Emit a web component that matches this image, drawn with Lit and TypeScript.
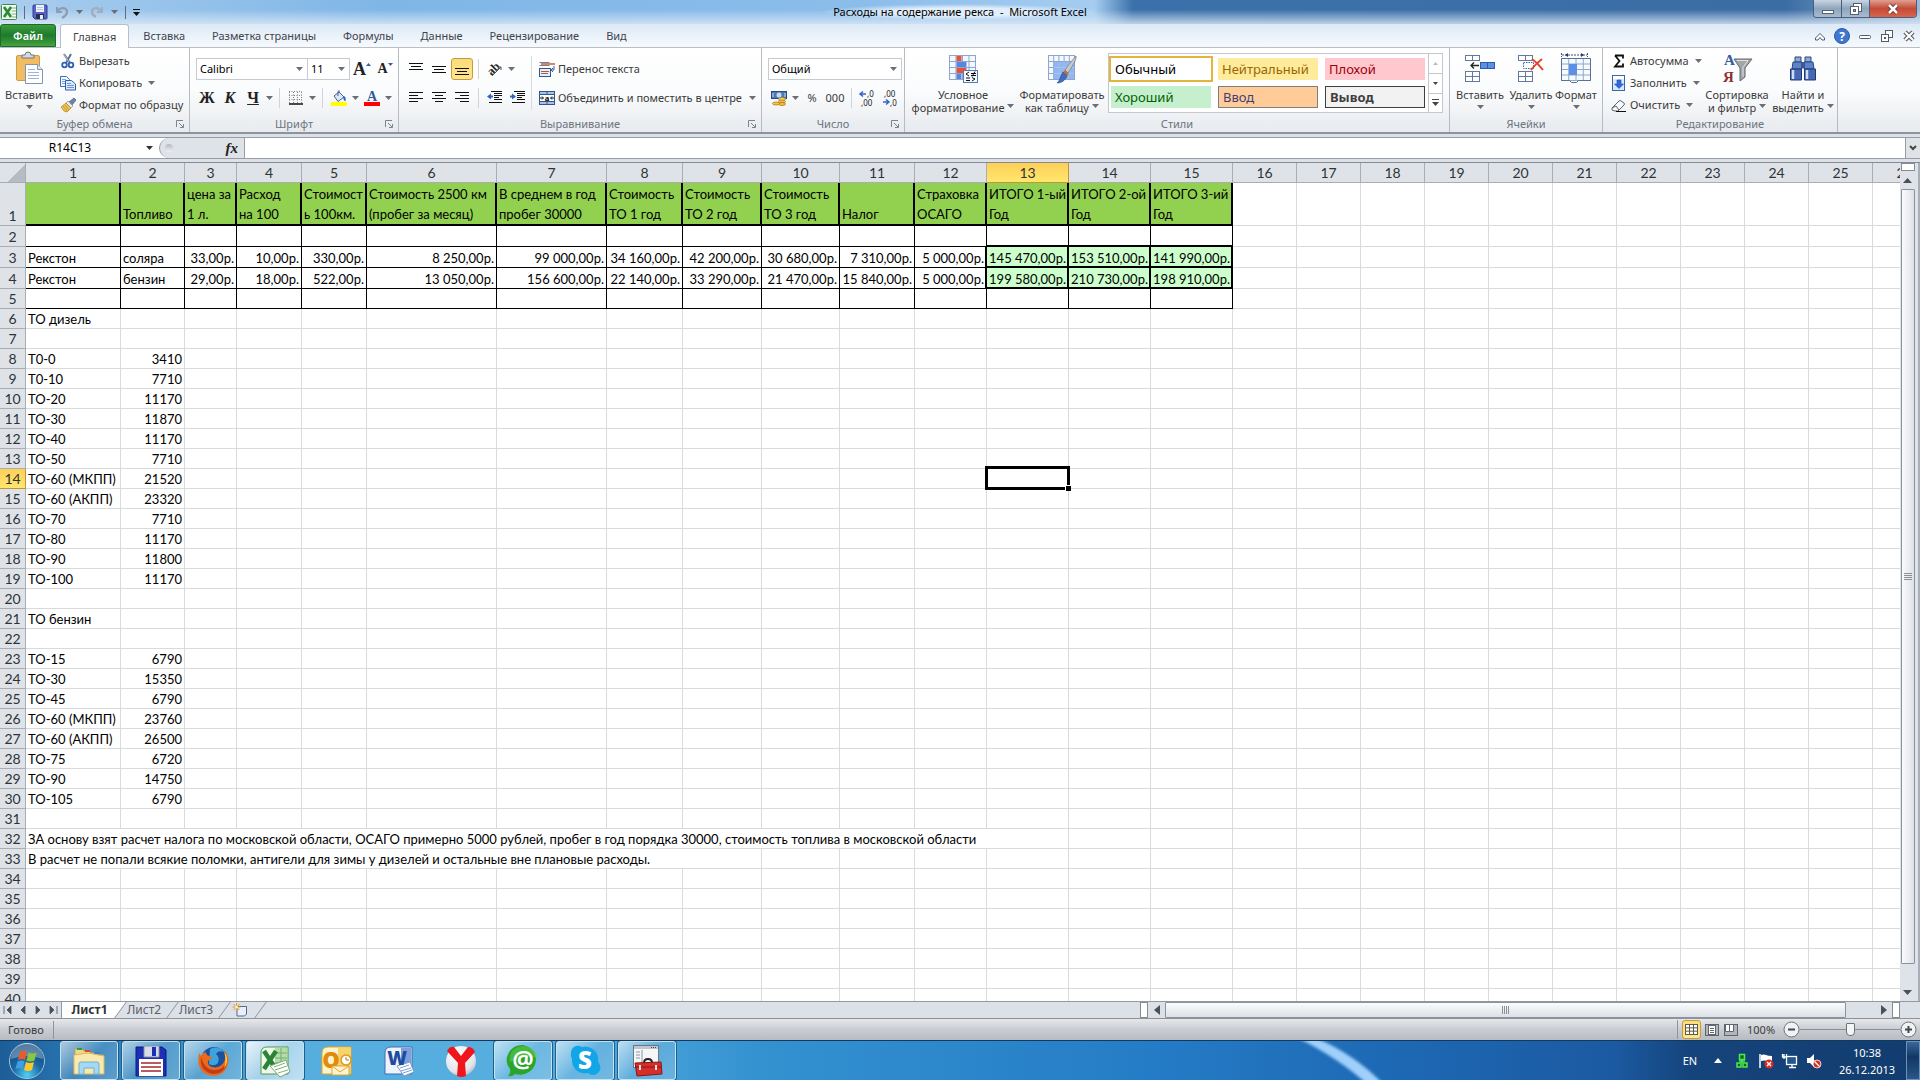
import { LitElement, html, svg, css, nothing } from "lit";
import { customElement } from "lit/decorators.js";
import { classMap } from "lit/directives/class-map.js";

const icon = (w: number, h: number, body: unknown) =>
  html`<svg width=${w} height=${h} viewBox="0 0 ${w} ${h}" aria-hidden="true">${body}</svg>`;

const arrow = html`<svg class="arrow" width="7" height="4" viewBox="0 0 7 4" aria-hidden="true"><path d="M0 0h7L3.500 4z" fill="#6a6f76" /></svg>`;

const lines = (rows: number[][], color = "#111") =>
  svg`${rows.map((r) => svg`<path d="M${r[0]} ${r[1]}.5h${r[2]}" stroke=${color} />`)}`;

const grid = (x: number, y: number, w: number, h: number, nx: number, ny: number, stroke: string, fill: string) => svg`
  <rect x=${x} y=${y} width=${w} height=${h} fill=${fill} stroke=${stroke} />
  ${Array.from({ length: nx - 1 }, (_, i) => svg`<path d="M${x + ((i + 1) * w) / nx} ${y}v${h}" stroke=${stroke} />`)}
  ${Array.from({ length: ny - 1 }, (_, i) => svg`<path d="M${x} ${y + ((i + 1) * h) / ny}h${w}" stroke=${stroke} />`)}`;

const I = {
  excel: icon(16, 16, svg`
    <rect x=".5" y=".5" width="15" height="15" rx="1" fill="#fff" stroke="#3c8a45"/>
    <path d="M2 2h9v12H2z" fill="#e3f2df"/><path d="M11 4h4M11 7h4M11 10h4M11 13h4" stroke="#6fb06f"/>
    <path d="M3 3l7 10M10 3L3 13" stroke="#2a8a37" stroke-width="2.600"/>`),
  save: icon(16, 16, svg`
    <path d="M1 2q0-1 1-1h12q1 0 1 1v12q0 1-1 1H3l-2-2z" fill="#5a63c4" stroke="#2f3a92"/>
    <rect x="4" y="1" width="8" height="7" fill="#eef2fb"/><path d="M5 3.500h6M5 5.500h6" stroke="#b8c3dd"/>
    <rect x="4" y="10" width="8" height="5" fill="#2b2f55"/><rect x="8" y="11" width="3" height="4" fill="#e8ecf8"/>`),
  undo: icon(14, 14, svg`<path d="M2 2v5h5" fill="none" stroke="#8f9db0" stroke-width="2"/><path d="M3 6c2-4 9-4 9 1 0 3-2 4-5 6" fill="none" stroke="#8f9db0" stroke-width="2.400"/>`),
  redo: icon(14, 14, svg`<path d="M12 2v5H7" fill="none" stroke="#a0aebf" stroke-width="2"/><path d="M11 6C9 2 2 2 2 7c0 3 2 4 4 5" fill="none" stroke="#a0aebf" stroke-width="2.400"/>`),
  paste: icon(32, 32, svg`
    <rect x="3.500" y="3.500" width="23" height="25" rx="1.500" fill="#f0bd63" stroke="#cf9a45"/>
    <path d="M9 6V3h3q0-3 3-3t3 3h3v3z" fill="#d5d9de" stroke="#6e7680"/>
    <path d="M12.500 12.500h12l5 5v14h-17z" fill="#fff" stroke="#7f95b8"/><path d="M24.500 12.500v5h5" fill="#dfe8f5" stroke="#7f95b8"/>
    <path d="M15 17.500h7M15 20.500h11M15 23.500h11M15 26.500h11" stroke="#9fb4d6"/>`),
  cut: icon(16, 16, svg`
    <path d="M4 1l6 9M11 1L6 10" stroke="#5f7187" stroke-width="2"/><path d="M4 1l5 8" stroke="#a9b7c9"/>
    <circle cx="4.500" cy="12" r="2.300" fill="none" stroke="#2c5fb5" stroke-width="1.800"/><circle cx="11" cy="12" r="2.300" fill="none" stroke="#2c5fb5" stroke-width="1.800"/>`),
  copy: icon(16, 16, svg`
    <path d="M.5 1.500h6l3 3v7h-9z" fill="#f2f7ff" stroke="#3f6fb8"/><path d="M2 4.500h4M2 6.500h5M2 8.500h5" stroke="#7fa3da"/>
    <path d="M5.500 5.500h6l4 3.500v6h-10z" fill="#dce9fb" stroke="#2f5fae"/><path d="M7 8.500h4M7 10.500h7M7 12.500h7" stroke="#6f97d3"/>`),
  brush: icon(16, 16, svg`
    <path d="M9 5l5-4 2 2-4 5z" fill="#6f83a8" stroke="#45587f" stroke-width=".7"/>
    <path d="M8 4l5 5-2 2-5-5z" fill="#e9ebef" stroke="#868d98" stroke-width=".7"/>
    <path d="M6 6l5 5-4 4-3-1-3-4z" fill="#eec554" stroke="#b98b25" stroke-width=".8"/><path d="M3 9l4 5M5 8l4 5" stroke="#c99a30"/>`),
  borders: icon(16, 16, svg`
    <path d="M1.500 2v12M5.500 2v12M9.500 2v12M13.500 2v12" stroke="#7b828b" stroke-dasharray="1 1.500"/>
    <path d="M1 1.500h13M1 5.500h13M1 9.500h13" stroke="#7b828b" stroke-dasharray="1 1.500"/><path d="M1 14h14" stroke="#111" stroke-width="1.500"/>`),
  fill: icon(16, 16, svg`
    <path d="M3 6l5-4 5 5-6 4.500z" fill="#dfe8f6" stroke="#46608c"/><path d="M7 6V1.500q1-1.500 2 0" fill="none" stroke="#46608c"/>
    <path d="M12 6c3 0 3 3 2.500 5-2 0-2-2-2.500-5z" fill="#2f66c4"/><rect y="12" width="16" height="4" fill="#ffff00"/>`),
  fontColor: icon(16, 16, svg`<text x="8" y="11" text-anchor="middle" font-family="Liberation Serif, serif" font-weight="700" font-size="14" fill="#34599c">A</text><rect y="12" width="16" height="4" fill="#f00"/>`),
  alignTop: icon(16, 16, lines([[1, 2, 14], [3, 5, 10], [1, 8, 14]])),
  alignMid: icon(16, 16, lines([[1, 5, 14], [3, 8, 10], [1, 11, 14]])),
  alignBot: icon(16, 16, lines([[1, 7, 14], [3, 10, 10], [1, 13, 14]])),
  alignL: icon(16, 16, lines([[1, 2, 14], [1, 5, 9], [1, 8, 14], [1, 11, 9]])),
  alignC: icon(16, 16, lines([[1, 2, 14], [4, 5, 8], [1, 8, 14], [4, 11, 8]])),
  alignR: icon(16, 16, lines([[1, 2, 14], [6, 5, 9], [1, 8, 14], [6, 11, 9]])),
  rotate: icon(16, 16, svg`<text x="0" y="12" transform="rotate(-45 6 8)" font-family="Liberation Serif, serif" font-weight="700" font-size="12" fill="#222">ab</text><path d="M5 15l9-9M14 9V6h-3" fill="none" stroke="#555"/>`),
  outdent: icon(16, 16, svg`${lines([[4, 1, 11], [7, 3, 8], [7, 5, 8], [7, 7, 5], [7, 9, 8], [2, 12, 13]])}<path d="M0 6.500l4-3v2h2v2H4v2z" fill="#2f66c4"/>`),
  indent: icon(16, 16, svg`${lines([[4, 1, 11], [7, 3, 8], [7, 5, 8], [7, 7, 5], [7, 9, 8], [2, 12, 13]])}<path d="M6 6.500l-4-3v2H0v2h2v2z" fill="#2f66c4"/>`),
  wrap: icon(16, 16, svg`
    <path d="M.5 1.500h10M.5 4.500h10" stroke="#70809c"/><path d="M2 3h14" stroke="#c3622c" stroke-width="1.500"/>
    <rect x=".5" y="7.500" width="11" height="8" fill="#e6eefb" stroke="#35548c"/><path d="M2 10.500h8M2 12.500h7" stroke="#b3592c"/>
    <path d="M15 5v4h-2M14 7l-2 2 2 2" fill="none" stroke="#2f5fb0"/>`),
  merge: icon(16, 16, svg`
    <rect x=".5" y="1.500" width="15" height="13" fill="#fff" stroke="#34548c"/><path d="M1 4.500h14M1 11.500h14" stroke="#34548c"/>
    <path d="M1 2h14v2H1zM1 12h14v2H1z" fill="#a8c1ea"/><path d="M8 2v2M8 12v3" stroke="#34548c"/>
    <text x="8" y="10.500" text-anchor="middle" font-family="Liberation Serif, serif" font-weight="700" font-size="9">a</text>
    <path d="M1 8h3M12 8h3M3 6.500L4.500 8 3 9.500M13 6.500L11.500 8l1.500 1.500" fill="none" stroke="#111"/>`),
  money: icon(16, 16, svg`
    <rect x=".5" y="1.500" width="15" height="7" fill="#4b78bd" stroke="#2a4a82"/><circle cx="8" cy="5" r="2.500" fill="#c9dbf4"/>
    <path d="M2 3v4M14 3v4" stroke="#c9dbf4"/><ellipse cx="11" cy="9" rx="3.500" ry="1.500" fill="#ffdb6b" stroke="#a87415" stroke-width=".7"/>
    <ellipse cx="11" cy="11.500" rx="3.500" ry="1.500" fill="#f5c040" stroke="#a87415" stroke-width=".7"/><ellipse cx="11" cy="14" rx="3.500" ry="1.500" fill="#f5c040" stroke="#a87415" stroke-width=".7"/>
    <ellipse cx="5" cy="13.500" rx="3.500" ry="1.500" fill="#f5c040" stroke="#a87415" stroke-width=".7"/>`),
  decInc: icon(18, 16, svg`<path d="M1 4h6M4 1.500L1 4l3 2.500" fill="none" stroke="#2f66c4" stroke-width="1.500"/>
    <text x="8" y="7" class="dec">,0</text><text x="2" y="16" class="dec">,00</text>`),
  decDec: icon(18, 16, svg`<text x="2" y="7" class="dec">,00</text><path d="M1 12h6M4 9.500L7 12l-3 2.500" fill="none" stroke="#2f66c4" stroke-width="1.500"/>
    <text x="8" y="16" class="dec">,0</text>`),
  cond: icon(32, 32, svg`
    ${grid(2.5, 3.5, 26, 24, 4, 4, "#8fa6cc", "#f3f8ff")}
    <path d="M9.500 4h5v5h-5zM9.500 16h10v5h-10z" fill="#e8503a"/><path d="M9.500 10h10v5h-10zM9.500 22h5v5h-5z" fill="#5687e0"/>
    <rect x="16.500" y="18.500" width="14" height="12" fill="#f4f8fe" stroke="#5a7cb4"/>
    <path d="M22 20l-3 2 3 2M19 26h4M19 28.500h4M24 21.500h5M24 23.500h5M28 19.500l-3 5M25 25.500l3 1.500-3 2" fill="none" stroke="#111"/>`),
  table: icon(32, 32, svg`
    ${grid(2.5, 3.5, 26, 24, 5, 4, "#8fa6cc", "#f3f8ff")}
    <path d="M8 10h20v17H8z" fill="#79a5ec" opacity=".8"/><path d="M8 15.500h20M8 21.500h20M13 10v17M18 10v17M23 10v17" stroke="#a9c5f3"/>
    <path d="M30 4c1 3-4 11-8 17l-3-3C23 12 28 6 30 4z" fill="#c4c9d0" stroke="#747c88" stroke-width=".8"/>
    <path d="M19 18l4 4-2 2-4-4z" fill="#b9752e"/><path d="M17 20l4 4c-2 5-6 7-10 7 3-2 3-7 6-11z" fill="#3f6cc0" stroke="#284a8c" stroke-width=".6"/>`),
  insCells: icon(32, 32, svg`
    ${grid(1.5, 3.5, 14, 5, 2, 1, "#64799f", "#fff")}${grid(1.5, 19.5, 14, 10, 2, 2, "#64799f", "#fff")}
    <rect x="16.500" y="10.500" width="14" height="6" fill="#5c90e6" stroke="#2f5aa6"/><path d="M23.500 10.500v6" stroke="#2f5aa6"/>
    <path d="M7 13.500h8M10 10.500l-3 3 3 3" fill="none" stroke="#222" stroke-width="1.300"/>`),
  delCells: icon(32, 32, svg`
    ${grid(3.5, 3.5, 14, 5, 2, 1, "#64799f", "#fff")}${grid(3.5, 19.5, 14, 10, 2, 2, "#64799f", "#fff")}
    <rect x="8.500" y="10.500" width="10" height="6" fill="none" stroke="#3f68b4" stroke-dasharray="1.500 1"/>
    <path d="M17 7c3 2 8 7 11 11M27 7c-4 3-8 7-11 11" fill="none" stroke="#e2452b" stroke-width="2"/>`),
  fmtCells: icon(32, 32, svg`
    <path d="M1.500 1v4M27.500 1v4M2 3h25" stroke="#3d5378" stroke-dasharray="2 1"/><path d="M8 1L5 3l3 2zM21 1l3 2-3 2z" fill="#233a63"/>
    ${grid(1.5, 6.5, 29, 22, 4, 4, "#8fa6cc", "#f6faff")}<path d="M9 12h8v11H9z" fill="#5c90e6"/>
    <path d="M1.500 6.500h29v22h-12l-2 2h-5l-2-2h-8z" fill="none" stroke="#5a7099"/>`),
  fillDown: icon(16, 16, svg`<rect x="1.500" y=".5" width="12" height="15" fill="#dbe8fb" stroke="#3b64ab"/><path d="M2 1h11v3H2z" fill="#fff"/><path d="M6 5h4v4h2.500L8 13.500 3.500 9H6z" fill="#2f6be0" stroke="#1d49a5" stroke-width=".6"/>`),
  eraser: icon(16, 16, svg`<path d="M1 11l7-7q1-1 2 0l3 2q1 1 0 2l-6 6H4l-3-1z" fill="#f6f8fb" stroke="#5c6675"/><path d="M1 11l4-2 3 4" fill="none" stroke="#5c6675"/><path d="M5 14.500h10" stroke="#111"/>`),
  sort: icon(32, 32, svg`
    <text x="3" y="13" font-family="Liberation Serif, serif" font-weight="700" font-size="15" fill="#34599c">А</text>
    <text x="2" y="30" font-family="Liberation Serif, serif" font-weight="700" font-size="15" fill="#8f2f2f">Я</text>
    <path d="M13 7h18l-7 9v9l-5 4V16z" fill="#a2a6ab" stroke="#65696e"/><path d="M16 8.500h11l-5 7v9" fill="none" stroke="#dfe1e4"/>`),
  find: icon(32, 32, svg`
    <path d="M8 5h6v5H8zM18 5h6v5h-6z" fill="#8ea8da" stroke="#2c4680"/><path d="M6 10h9v7H5zM17 10h9l1 7H17z" fill="#5f83c9" stroke="#2c4680"/>
    <rect x="14" y="10" width="4" height="6" fill="#3a5796"/>
    <path d="M3.500 17h11v11h-11zM17.500 17h11v11h-11z" fill="#4469b5" stroke="#223a72"/><path d="M6 18v9M20 18v9" stroke="#cfdcf4" stroke-width="2.500"/>`),
  newSheet: icon(16, 14, svg`<path d="M5 3.500h9.500V11l-2 2H5z" fill="#e9effa" stroke="#51688f"/><path d="M4.500 0v8M.5 4h8M1.500 1l6 6M7.500 1l-6 6" stroke="#e09a2b"/><circle cx="4.500" cy="4" r="1.500" fill="#fff2b0"/>`),
};

const T = {
  orb: icon(38, 38, svg`
    <defs><radialGradient id="ob" cx=".5" cy=".9" r=".9"><stop offset="0" stop-color="#4fd0f4"/><stop offset=".45" stop-color="#1c6aa5"/><stop offset="1" stop-color="#123f70"/></radialGradient></defs>
    <circle cx="19" cy="19" r="17.500" fill="url(#ob)" stroke="#9cc6de"/><path d="M3 17a16 16 0 0 1 32 0q-16-6-32 0z" fill="#fff" opacity=".3"/>
    <path d="M12 10q3-2 7 0l-2 8q-3-2-7 0z" fill="#ee5a27"/><path d="M20.500 10.500q4 2 8 0l-2 8q-4 2-8 0z" fill="#8cc63e"/>
    <path d="M9.500 19.500q4-2 7 0l-2 7.500q-3-2-7 0z" fill="#3f9fe4"/><path d="M18 20q4 2 8 0l-2 8q-4 2-8 0z" fill="#fcc727"/>`),
  folder: icon(34, 32, svg`
    <path d="M3 4h7l2 2h5l2 2h5l2 2h5v17H3z" fill="#f2d684" stroke="#c9a24b"/><path d="M5 3h5v2H5z" fill="#25a344"/><path d="M13 5h5v2h-5z" fill="#d94a2a"/><path d="M22 7h6v2h-6z" fill="#3f7fd0"/>
    <path d="M2 10l14-2 16 3v18H2z" fill="#f9e9ac" stroke="#d9b964"/><path d="M7 29V19q0-2 2-2h16q2 0 2 2v10h-5v-6H12v6z" fill="#a5d8f2" stroke="#6ab1da"/>`),
  floppy: icon(34, 32, svg`
    <path d="M2 2h26l4 3v26H2z" fill="#1d2fb4" stroke="#0d1a7c"/><path d="M10 1h15v11H10z" fill="#d8dce6" stroke="#8a90a5"/><rect x="18" y="2" width="4" height="9" fill="#1d2fb4"/>
    <rect x="5" y="14" width="24" height="17" fill="#fff"/><path d="M7 18h20M7 22h20M7 26h20" stroke="#a3262c" stroke-width="1.500"/>`),
  firefox: icon(34, 34, svg`
    <circle cx="18" cy="16" r="13" fill="#1c4f9c"/><path d="M14 5q8-4 14 3-6-2-8 2 4 3 2 9-4 4-9 1" fill="#3ea3dc"/>
    <path d="M3 9l2 3q1-3 5-4 0 3 3 4 3 0 3 2l-4 3q-1 4 4 6 8 2 12-5 3-6 0-12 6 6 4 14-3 11-14 12Q5 31 2.500 20 2 14 3 9z" fill="#ea6a1c"/>
    <path d="M5 13q-2 13 11 17Q30 30 31 17q-4 10-14 9-9-1-12-13z" fill="#c63b17"/><path d="M28 8q5 6 2 13l-2 3q3-8 0-16z" fill="#fcd548"/>`),
  xl: icon(34, 32, svg`
    <path d="M3 8q0-6 6-6h21v27H3z" fill="#eef7ea" stroke="#4f9a4f"/><path d="M17 3h12v25H17z" fill="#b6dbab"/><path d="M17 8h12M17 13h12M17 18h12M23 3v25" stroke="#6fb16a"/>
    <path d="M6 6l12 18M18 6L6 24" stroke="#2a8436" stroke-width="4.500"/><path d="M12 21l16-6 4 12-10 5z" fill="#fff" stroke="#79a874"/><path d="M16 22l11-4M17 25l12-4M20 28l10-3" stroke="#7ab573"/>`),
  outlook: icon(34, 32, svg`
    <path d="M2 8q0-6 6-6h23v27H2z" fill="#fff3cd" stroke="#e1a51f"/><path d="M18 3h12v25H18z" fill="#f8d36b"/>
    <text x="11" y="23" text-anchor="middle" font-family="Open Sans, sans-serif" font-weight="800" font-size="22" fill="#e28a0b">O</text>
    <circle cx="26" cy="15" r="5" fill="#fff" stroke="#d99a1e" stroke-width="1.500"/><path d="M26 12v3h3" fill="none" stroke="#b77a10"/>
    <path d="M12 21h17v9H12z" fill="#fff6da" stroke="#e1a51f"/><path d="M12 21l8 6 9-6" fill="none" stroke="#e1a51f"/>`),
  word: icon(34, 32, svg`
    <path d="M3 8q0-6 6-6h21v27H3z" fill="#eef4fd" stroke="#3f6db8"/><path d="M19 3h10v25H19z" fill="#7f9fdc"/>
    <path d="M15 21l13-4 4 10-10 4z" fill="#fff" stroke="#7f9bcb"/><path d="M18 23l9-3M19 26l10-3M21 28l9-3" stroke="#7f9fd6"/>
    <text x="15" y="20" text-anchor="middle" font-family="Open Sans, sans-serif" font-weight="800" font-size="19" fill="#1f4c9e">W</text>`),
  yandex: icon(34, 34, svg`
    <defs><radialGradient id="yb" cx=".4" cy=".3" r=".8"><stop offset="0" stop-color="#fff"/><stop offset=".7" stop-color="#e3e5ea"/><stop offset="1" stop-color="#a8adb8"/></radialGradient></defs>
    <circle cx="17" cy="17" r="15" fill="url(#yb)"/><path d="M3 7q3-5 7-4l7 9 7-9q5 0 7 5l-10 11 1 13q-5 2-9 0l1-13z" fill="#f0141c"/>`),
  agent: icon(34, 34, svg`
    <path d="M17 1a16 15 0 1 1-8 29q-3 3-7 2 3-3 2-7A16 15 0 0 1 17 1z" fill="#2aa52c"/>
    <path d="M17 2a14 12 0 0 1 14 12Q18 10 4 18 2 4 17 2z" fill="#5cc94c" opacity=".6"/>
    <text x="17" y="24" text-anchor="middle" font-family="Open Sans, sans-serif" font-weight="700" font-size="24" fill="#fff">@</text>`),
  skype: icon(34, 34, svg`
    <path d="M3 9a7 7 0 0 1 11-6 13 13 0 0 1 16 15 7 7 0 0 1-10 11A13 13 0 0 1 4 15 8 8 0 0 1 3 9z" fill="#12a5e8"/>
    <text x="17" y="25" text-anchor="middle" font-family="Open Sans, sans-serif" font-weight="800" font-size="24" fill="#fff">S</text>`),
  toolbox: icon(34, 34, svg`
    <rect x="3.500" y="1.500" width="25" height="22" fill="#f5f6f8" stroke="#6e7680"/><path d="M4 2h24v3H4z" fill="#bfc6d0"/><path d="M21 3.500h6" stroke="#444" stroke-dasharray="1 1"/><path d="M6 8h4M6 11h4M6 14h4M12 6v16" stroke="#8c939e"/>
    <path d="M14 19q0-4 4-4t4 4" fill="none" stroke="#222" stroke-width="2"/><path d="M5 19l26-1 1 12-25 2z" fill="#d42f2b" stroke="#8d1512"/><path d="M5 23h27" stroke="#8d1512"/><path d="M10 21v5M26 21v5" stroke="#f3dede" stroke-width="2"/>`),
};

const COLS = [95, 64, 52, 65, 65, 130, 110, 76, 79, 78, 75, 72, 82, 82, 82, 64, 64, 64, 64, 64, 64, 64, 64, 64, 64, 64];
const HEAD = ["", "Топливо", "цена за\n1 л.", "Расход\nна 100", "Стоимост\nь 100км.", "Стоимость 2500 км\n(пробег за месяц)", "В среднем в год\nпробег 30000", "Стоимость\nТО 1 год", "Стоимость\nТО 2 год", "Стоимость\nТО 3 год", "Налог", "Страховка\nОСАГО", "ИТОГО 1-ый\nГод", "ИТОГО 2-ой\nГод", "ИТОГО 3-ий\nГод"];
const DATA: Record<number, string[]> = {
  1: HEAD,
  3: ["Рекстон", "соляра", "33,00р.", "10,00р.", "330,00р.", "8 250,00р.", "99 000,00р.", "34 160,00р.", "42 200,00р.", "30 680,00р.", "7 310,00р.", "5 000,00р.", "145 470,00р.", "153 510,00р.", "141 990,00р."],
  4: ["Рекстон", "бензин", "29,00р.", "18,00р.", "522,00р.", "13 050,00р.", "156 600,00р.", "22 140,00р.", "33 290,00р.", "21 470,00р.", "15 840,00р.", "5 000,00р.", "199 580,00р.", "210 730,00р.", "198 910,00р."],
  6: ["ТО дизель"],
  8: ["Т0-0", "3410"],
  9: ["Т0-10", "7710"],
  10: ["ТО-20", "11170"],
  11: ["ТО-30", "11870"],
  12: ["ТО-40", "11170"],
  13: ["ТО-50", "7710"],
  14: ["ТО-60 (МКПП)", "21520"],
  15: ["ТО-60 (АКПП)", "23320"],
  16: ["ТО-70", "7710"],
  17: ["ТО-80", "11170"],
  18: ["ТО-90", "11800"],
  19: ["ТО-100", "11170"],
  21: ["ТО бензин"],
  23: ["ТО-15", "6790"],
  24: ["ТО-30", "15350"],
  25: ["ТО-45", "6790"],
  26: ["ТО-60 (МКПП)", "23760"],
  27: ["ТО-60 (АКПП)", "26500"],
  28: ["ТО-75", "6720"],
  29: ["ТО-90", "14750"],
  30: ["ТО-105", "6790"],
  32: ["ЗА основу взят расчет налога по московской области, ОСАГО примерно 5000 рублей, пробег в год порядка 30000, стоимость топлива в московской области"],
  33: ["В расчет не попали всякие поломки, антигели для зимы у дизелей и остальные вне плановые расходы."],
};
const SPANS: Record<number, number> = { 32: 13, 33: 9 };

const reset = css`
  * { box-sizing: border-box; }
  button, select, input { font: inherit; color: inherit; margin: 0; padding: 0; border: 0; background: none; border-radius: 0; }
  svg { display: block; flex: none; overflow: visible; }
`;

@customElement("sheet-grid")
export class SheetGrid extends LitElement {
  static styles = [reset, css`
    :host { display: block; overflow: hidden; background: #fff; }
    table { table-layout: fixed; width: 0; border-collapse: separate; border-spacing: 0; font: 13px/20px Lato, "Open Sans", sans-serif; color: #000; }
    .rowhead-col { width: 26px; }
    th { height: 20px; padding: 0; font-weight: 400; font-size: 14px; color: #2e3338; background: #dfe3e8; border: solid #a8aeb6; border-width: 0 1px 1px 0; text-align: center; vertical-align: bottom; line-height: 19px; }
    .picked { background: linear-gradient(#ffcf57, #ffe76e); border-color: #c2933a; }
    .corner { background: linear-gradient(135deg, #dfe3e8 60%, #b6bcc4 60%); }
    td { height: 20px; padding: 0 1px 0 2px; border: solid #d8dadc; border-width: 0 1px 1px 0; white-space: nowrap; vertical-align: bottom; line-height: 17px; }
    .num { text-align: right; padding-right: 2px; padding-left: 0; }
    .tall { height: 43px; }
    .mid { height: 21px; }
    .boxed { border-color: #000; }
    .head { background: #92d050; border: solid #000; border-width: 0 2px 2px 0; padding-right: 0; white-space: pre; line-height: 20px; }
    .total { background: #ccffcc; border: solid #000; border-width: 0 2px 2px 0; padding-right: 1px; line-height: 16px; }
    .thick-bottom { border-bottom-width: 2px; }
    .thick-right { border-right-width: 2px; padding-right: 1px; }
    .active { position: relative; }
    .active::before { content: ""; position: absolute; inset: -3px -2px -2px -2px; border: 3px solid #000; }
    .active::after { content: ""; position: absolute; right: -3px; bottom: -3px; width: 5px; height: 5px; background: #000; border: solid #fff; border-width: 1px 0 0 1px; }
  `];

  private cell(r: number, c: number) {
    const text = DATA[r]?.[c - 1] ?? "";
    const table = r <= 5 && c <= 15;
    const cls = {
      boxed: table,
      head: r === 1 && c <= 15,
      num: r > 1 && /^\d/.test(text),
      total: (r === 3 || r === 4) && c >= 13 && c <= 15,
      "thick-bottom": r === 2 && c >= 13 && c <= 15,
      "thick-right": (r === 3 || r === 4) && c === 12,
      active: r === 14 && c === 13,
    };
    const span = c === 1 ? SPANS[r] : undefined;
    return html`<td class=${classMap(cls)} colspan=${span ?? 1}>${text}</td>`;
  }

  private row(r: number) {
    const cells = COLS.map((_, i) => i + 1).filter((c) => c === 1 || c > (SPANS[r] ?? 1));
    const size = { tall: r === 1, mid: r > 1 && r < 5 };
    return html`<tr><th scope="row" class=${classMap({ ...size, picked: r === 14 })}>${r}</th>${cells.map((c) => this.cell(r, c))}</tr>`;
  }

  render() {
    return html`<table>
      <colgroup><col class="rowhead-col" />${COLS.map((w) => html`<col style="width:${w}px" />`)}</colgroup>
      <thead><tr><th class="corner"></th>${COLS.map((_, i) => html`<th scope="col" class=${i === 12 ? "picked" : nothing}>${i + 1}</th>`)}</tr></thead>
      <tbody>${Array.from({ length: 40 }, (_, i) => this.row(i + 1))}</tbody>
    </table>`;
  }
}

@customElement("app-root")
export class AppRoot extends LitElement {
  static styles = [reset, css`
    :host { display: flex; flex-direction: column; height: 100vh; min-height: 600px; overflow: hidden; font: 11px/14px "Noto Sans", "Open Sans", sans-serif; color: #3b3b3b; background: #dce1e8; }
    button { display: inline-flex; align-items: center; justify-content: center; white-space: nowrap; }
    .arrow { flex: none; }

    .title { display: grid; grid-template-columns: 1fr auto 1fr; height: 24px; background: linear-gradient(transparent 40%, #dce9f6cc 100%), linear-gradient(90deg, #a9cdee, #7fb6e6 20%, #8bbdea 45%, #a6cdf0 57%, #3b71aa 59%, #3b6da4 93%, #9db9d6); }
    .qat { display: flex; align-items: center; gap: 7px; padding-left: 1px; }
    .qat .bar { width: 1px; height: 13px; background: #5c6d80; }
    .title h1 { margin: 0; align-self: center; font-size: 11px; font-weight: 400; line-height: 16px; color: #000; white-space: pre; padding: 0 12px; background: radial-gradient(closest-side, #e2effb 50%, transparent); }
    .wins { display: flex; justify-self: end; align-self: start; margin-right: 3px; border: 1px solid #48607c; border-top: 0; border-radius: 0 0 4px 4px; overflow: hidden; }
    .wins button { height: 17px; width: 28px; border-right: 1px solid #48607c; background: linear-gradient(#c9d5e2, #8ea5bd 50%, #a9bccf); }
    .wins .close { width: 46px; border-right: 0; background: linear-gradient(#e0a090, #c64a38 50%, #d8654c); }

    .tabs { display: flex; height: 24px; background: linear-gradient(#dce9f6, #f7fafd); border-bottom: 1px solid #b9bfc8; align-items: stretch; }
    .tabs .tab { padding: 0 13px 0 14px; color: #3f444b; height: 23px; }
    .tabs .file { width: 56px; padding: 0; color: #fff; font-weight: 600; border-radius: 3px 3px 0 0; background: linear-gradient(#3c9c3e, #1d7a2c 50%, #46a33d); border: 1px solid #1c6b28; margin-right: 4px; }
    .tabs .on { background: #fff; height: 24px; padding: 0 12px; border: 1px solid #b9bfc8; border-bottom: 0; border-radius: 3px 3px 0 0; }
    .tabs .tail { margin-left: auto; display: flex; align-items: center; gap: 8px; padding-right: 4px; }

    .ribbon { display: grid; grid-template-columns: 190px 209px 363px 143px 545px 153px 235px 1fr; height: 86px; background: linear-gradient(#fff, #fbfcfd 50%, #e7eaee); border-bottom: 2px solid #8d939c; }
    .group { display: flex; flex-direction: column; border-right: 1px solid #b7bcc4; min-width: 0; }
    .body { display: flex; flex: 1; min-height: 0; }
    .caption { display: grid; grid-template-columns: 14px 1fr 14px; align-items: center; height: 16px; color: #6d747e; text-align: center; padding: 0 2px; }
    .caption span { grid-column: 2; }
    .stack { display: flex; flex-direction: column; padding-top: 2px; align-items: flex-start; }
    .edit { width: 101px; padding-left: 6px; }
    .small { height: 22px; gap: 3px; padding: 0 2px; color: #3b3b3b; }
    .small .arrow { margin-left: 3px; }
    .big { flex: none; flex-direction: column; justify-content: flex-start; padding-top: 4px; line-height: 13px; height: 68px; }
    .big svg:first-child { margin-bottom: 4px; }
    .big .line { display: flex; align-items: center; gap: 3px; height: 13px; }
    .big > .arrow { margin-top: 4px; }
    .w42 { width: 42px; } .w48 { width: 48px; } .w58 { width: 58px; } .w60 { width: 60px; } .w66 { width: 66px; } .w82 { width: 82px; } .w116 { width: 116px; }
    .rows { display: flex; flex-direction: column; gap: 7px; padding: 10px 0 0 6px; }
    .row { display: flex; align-items: center; gap: 1px; height: 22px; }
    .tool { width: 22px; height: 22px; }
    .drop { width: 9px; height: 22px; }
    .sel { background: linear-gradient(#fbdc7c, #ffe58d); border: 1px solid #c79b3c; border-radius: 3px; }
    .sep { width: 1px; height: 20px; margin: 0 4px; background: #d0d4da; }
    .tallsep { width: 1px; height: 54px; margin: 8px 4px 0 2px; background: #d8dbe0; }
    .glyph { font: bold 16px/20px "Liberation Serif", serif; color: #222; }
    .italic { font-style: italic; } .under { text-decoration: underline; }
    .grow { font-size: 18px; } .shrink { font-size: 14px; }
    .dec { font: 8px "Noto Sans", sans-serif; fill: #222; }
    .combo { display: grid; align-items: center; height: 22px; border: 1px solid #c6cbd2; background: #fff; color: #000; }
    .combo select { grid-area: 1 / 1; appearance: none; height: 20px; padding-left: 3px; outline: 0; width: 100%; }
    .combo .arrow { grid-area: 1 / 1; justify-self: end; margin-right: 4px; pointer-events: none; }
    .c-font { width: 112px; } .c-size { width: 43px; } .c-num { width: 134px; }
    .join { margin-left: -2px; }
    .text { padding: 0 2px; gap: 3px; height: 22px; }
    .text .arrow { margin-left: 4px; }
    .inner { padding-left: 1px; }

    .gallery { display: grid; grid-template-columns: 1fr 14px; width: 335px; height: 60px; margin: 5px 0 0 5px; border: 1px solid #c3c8cf; background: #fff; }
    .chips { display: grid; grid-template-columns: repeat(3, 100px); grid-template-rows: 22px 22px; gap: 6px 7px; padding: 4px 0 0 2px; font-size: 13px; }
    .chip { justify-content: flex-start; padding-left: 4px; }
    .normal { color: #000; outline: 2px solid #e3b53d; outline-offset: 0; }
    .neutral { background: #ffeb9c; color: #9c6500; }
    .bad { background: #ffc7ce; color: #9c0006; }
    .good { background: #c6efce; color: #006100; }
    .entry { background: #ffcc99; color: #3f3f76; border: 1px solid #7f7f7f; }
    .output { background: #f2f2f2; color: #3f3f3f; border: 1px solid #3f3f3f; font-weight: 700; }
    .updown { display: grid; grid-template-rows: repeat(3, 1fr); border-left: 1px solid #c3c8cf; }
    .updown button + button { border-top: 1px solid #c3c8cf; }

    .formula { display: flex; height: 22px; margin: 3px 0; border: solid #979da6; border-width: 1px 0; background: #fff; }
    .name { display: flex; align-items: center; width: 159px; color: #000; }
    .name input { width: 140px; text-align: center; font-size: 12px; }
    .name button { width: 19px; }
    .fx { display: flex; align-items: center; width: 86px; background: #dfe3e8; border-right: 1px solid #979da6; border-radius: 10px 0 0 10px; border-left: 1px solid #979da6; padding: 0 6px 0 5px; justify-content: space-between; }
    .fx i { width: 8px; height: 8px; border-radius: 50%; background: linear-gradient(#b5bac0, #eef0f3); }
    .fx button { font: italic bold 15px/18px "Liberation Serif", serif; color: #222; }
    .formula .value { flex: 1; min-width: 0; padding: 0 4px; }
    .formula .expand { width: 15px; background: #dfe3e8; border-left: 1px solid #979da6; }

    .sheet { display: flex; flex: 1; min-height: 0; border-top: 1px solid #858b94; }
    sheet-grid { flex: 1; min-width: 0; }
    .vbar { display: flex; flex-direction: column; align-items: center; width: 20px; background: #dfe3e9; border-right: 2px solid #a9afb8; padding-right: 3px; }
    .vbar .split { width: 14px; height: 8px; border: 1px solid #858b94; background: #fff; }
    .vbar .end { height: 18px; width: 14px; }
    .vbar .thumb, .hbar .thumb { display: flex; align-items: center; justify-content: center; border: 1px solid #8b929c; border-radius: 1px; }
    .vbar .thumb { width: 14px; flex: 1; margin-bottom: 19px; background: linear-gradient(90deg, #fafbfc, #dde1e7); }

    .foot { display: flex; height: 17px; background: #dce0e7; border-top: 1px solid #9299a2; }
    .nav { display: flex; width: 62px; align-items: center; justify-content: space-around; border-right: 1px solid #9299a2; }
    .nav button { width: 14px; height: 14px; }
    .sheets { display: flex; flex: 1; font-size: 12px; }
    .sheets button { position: relative; width: 52px; height: 16px; color: #5a6068; }
    .sheets button::after { content: ""; position: absolute; right: -7px; top: 0; width: 1px; height: 16px; background: #8d949e; transform: skewX(-36deg); }
    .sheets .cur { color: #333; font-weight: 700; background: #fff; padding-right: 5px; }
    .sheets .cur::before { content: ""; position: absolute; right: -6px; top: 0; width: 12px; height: 16px; background: #fff; transform: skewX(-36deg); }
    .sheets .cur span { position: relative; }
    .sheets span { padding-left: 8px; }
    .sheets .new { width: 36px; padding-left: 8px; }
    .hbar { display: flex; width: 780px; }
    .hbar .split { width: 8px; border: 1px solid #858b94; background: #fff; }
    .hbar .end { width: 17px; }
    .hbar .thumb { flex: 1; margin-right: 29px; background: linear-gradient(#fafbfc, #dde1e7); }
    .hbar .room { width: 20px; }

    .status { display: flex; align-items: center; height: 22px; padding: 0 3px 0 8px; background: linear-gradient(#e6e8eb, #c9ccd1 50%, #b8bcc2); border-top: 1px solid #8d939c; color: #3b3b3b; }
    .status .vsep { width: 1px; height: 18px; margin-left: 9px; background: #8f959d; }
    .views { display: flex; align-items: center; gap: 3px; margin-left: auto; border-left: 1px solid #8f959d; padding-left: 4px; }
    .views button { width: 16px; height: 18px; }
    .views .sel { width: 19px; height: 19px; }
    .zoom { display: flex; align-items: center; padding-left: 8px; }
    .zoom .pct { width: 36px; justify-content: flex-start; }
    .zoom input { appearance: none; width: 100px; height: 14px; background: linear-gradient(#8a9098, #8a9098) center / 100% 1px no-repeat; }
    .zoom input::-webkit-slider-thumb { appearance: none; width: 9px; height: 13px; background: #f3f5f7; border: 1px solid #6d737b; border-radius: 1px 1px 4px 4px; }

    .taskbar { display: flex; align-items: stretch; height: 40px; border-top: 1px solid #123a5e; background:
      linear-gradient(90deg, #1d5d98, #2b7db8 5%, #55aede 16%, #56aede 28%, #3391d0 40%, #257cc6 60%, #1e69b5 72%, #1b5aa2 84%, #15447c 88%, #123c6e); }
    .start { width: 54px; margin-right: 6px; }
    .apps { display: flex; flex: 1; gap: 4px; overflow: hidden; }
    .app { width: 58px; border-radius: 3px; border: 1px solid transparent; }
    .run { border-color: #c3e2f3; box-shadow: 0 0 0 1px #205f8c; background: linear-gradient(135deg, #ffffffa0, #ffffff20 50%, #ffffff38); }
    .front { background: linear-gradient(135deg, #ffffffe0, #ffffff80 50%, #ffffffa0); }
    .streak { align-self: stretch; margin-left: 600px; overflow: hidden; }
    .tray { display: flex; align-items: center; color: #fff; gap: 8px; }
    .tray button { min-width: 16px; height: 24px; color: #fff; }
    .tray .lang { margin-right: 4px; }
    .clock { margin: 0 8px 0 6px; text-align: center; line-height: 17px; width: 62px; }
    .desk { width: 14px; border: 1px solid #6a93ba; background: linear-gradient(#3c6797, #123764 40%, #2a5688); }
  `];

  private drop(label: string) {
    return html`<button class="drop" aria-label=${label}>${arrow}</button>`;
  }

  private tool(label: string, body: unknown, cls = "") {
    return html`<button class="tool ${cls}" aria-label=${label}>${body}</button>`;
  }

  private small(label: string, body: unknown, dd = false) {
    return html`<button class="small">${body}${label}${dd ? arrow : nothing}</button>`;
  }

  private big(body: unknown, first: string, second: string, cls: string) {
    return html`<button class="big ${cls}">${body}<span class="line">${first}</span>${second ? html`<span class="line">${second}${arrow}</span>` : arrow}</button>`;
  }

  private combo(label: string, value: string, cls: string) {
    return html`<div class="combo ${cls}"><select aria-label=${label}><option>${value}</option></select>${arrow}</div>`;
  }

  private group(name: string, body: unknown, launcher = true) {
    return html`<section class="group" aria-label=${name}>
      <div class="body">${body}</div>
      <div class="caption"><span>${name}</span>${launcher ? html`<button aria-label="Параметры">${icon(8, 8, svg`<path d="M.5 7V.5H7M3 3l4 4M7.500 4v3.500H4" fill="none" stroke="#7d848e"/>`)}</button>` : nothing}</div>
    </section>`;
  }

  private renderTitle() {
    return html`<header class="title">
      <div class="qat">
        ${I.excel}<span class="bar"></span>
        <button aria-label="Сохранить">${I.save}</button>
        <button aria-label="Отменить">${I.undo}</button>${arrow}
        <button aria-label="Вернуть">${I.redo}</button>${arrow}
        <span class="bar"></span>
        <button aria-label="Настройка панели">${icon(7, 7, svg`<path d="M0 .5h7" stroke="#111"/><path d="M0 3h7L3.500 7z" fill="#111"/>`)}</button>
      </div>
      <h1>Расходы на содержание рекса  -  Microsoft Excel</h1>
      <div class="wins">
        <button aria-label="Свернуть">${icon(12, 12, svg`<rect x=".5" y="7.500" width="11" height="3" fill="#fff" stroke="#55606e"/>`)}</button>
        <button aria-label="Развернуть">${icon(12, 12, svg`<rect x="3.500" y=".5" width="8" height="8" fill="#fff" stroke="#55606e"/><rect x=".5" y="3.500" width="8" height="8" fill="#fff" stroke="#55606e"/><rect x="3.500" y="6.500" width="2" height="2" fill="#8ea5bd" stroke="#55606e"/>`)}</button>
        <button class="close" aria-label="Закрыть">${icon(12, 12, svg`<path d="M2 2l8 8M10 2l-8 8" stroke="#6e3028" stroke-width="4.500"/><path d="M2 2l8 8M10 2l-8 8" stroke="#fff" stroke-width="2.500"/>`)}</button>
      </div>
    </header>`;
  }

  private renderTabs() {
    const names = ["Вставка", "Разметка страницы", "Формулы", "Данные", "Рецензирование", "Вид"];
    return html`<nav class="tabs">
      <button class="tab file">Файл</button><button class="tab on">Главная</button>
      ${names.map((n) => html`<button class="tab">${n}</button>`)}
      <div class="tail">
        <button aria-label="Свернуть ленту">${icon(12, 10, svg`<path d="M1.500 7L6 2.500 10.500 7v2H8L6 6.500 4 9H1.500z" fill="#fff" stroke="#555b64"/>`)}</button>
        <button aria-label="Справка">${icon(16, 16, svg`<circle cx="8" cy="8" r="7.500" fill="#3f77d0" stroke="#2c59a8"/><text x="8" y="12.500" text-anchor="middle" font-family="Open Sans, sans-serif" font-weight="700" font-size="12" fill="#fff">?</text>`)}</button>
        <button aria-label="Свернуть окно">${icon(14, 12, svg`<rect x="1.500" y="5.500" width="11" height="3" rx="1" fill="#fff" stroke="#555b64"/>`)}</button>
        <button aria-label="Восстановить окно">${icon(14, 12, svg`<rect x="5.500" y=".5" width="7" height="7" fill="#fff" stroke="#555b64"/><rect x="1.500" y="4.500" width="7" height="7" fill="#fff" stroke="#555b64"/><rect x="4" y="7" width="2" height="2" fill="#555b64"/>`)}</button>
        <button aria-label="Закрыть окно">${icon(14, 12, svg`<path d="M3 2l8 8M11 2l-8 8" stroke="#555b64" stroke-width="4.500"/><path d="M3 2l8 8M11 2l-8 8" stroke="#fff" stroke-width="2.200"/>`)}</button>
      </div>
    </nav>`;
  }

  private renderRibbon() {
    const sep = html`<span class="sep"></span>`;
    return html`<div class="ribbon">
      ${this.group("Буфер обмена", html`
        ${this.big(I.paste, "Вставить", "", "w58")}
        <div class="stack">${this.small("Вырезать", I.cut)}${this.small("Копировать", I.copy, true)}${this.small("Формат по образцу", I.brush)}</div>`)}
      ${this.group("Шрифт", html`<div class="rows">
        <div class="row">${this.combo("Шрифт", "Calibri", "c-font")}${this.combo("Размер шрифта", "11", "c-size join")}
          ${this.tool("Увеличить размер", html`<span class="glyph grow">A</span>${icon(5, 12, svg`<path d="M0 3h5L2.500 0z" fill="#3a5e9e"/>`)}`)}
          ${this.tool("Уменьшить размер", html`<span class="glyph shrink">A</span>${icon(5, 12, svg`<path d="M0 0h5L2.500 3z" fill="#3a5e9e"/>`)}`)}</div>
        <div class="row">${this.tool("Полужирный", "Ж", "glyph")}${this.tool("Курсив", "К", "glyph italic")}${this.tool("Подчеркнутый", "Ч", "glyph under")}${this.drop("Подчеркивание")}
          ${sep}${this.tool("Границы", I.borders)}${this.drop("Виды границ")}${sep}${this.tool("Цвет заливки", I.fill)}${this.drop("Заливка")}${this.tool("Цвет текста", I.fontColor)}${this.drop("Цвета текста")}</div>
      </div>`)}
      ${this.group("Выравнивание", html`<div class="rows">
          <div class="row">${this.tool("По верхнему краю", I.alignTop)}${this.tool("По середине", I.alignMid)}${this.tool("По нижнему краю", I.alignBot, "sel")}${sep}${this.tool("Ориентация", I.rotate)}${this.drop("Виды ориентации")}</div>
          <div class="row">${this.tool("По левому краю", I.alignL)}${this.tool("По центру", I.alignC)}${this.tool("По правому краю", I.alignR)}${sep}${this.tool("Уменьшить отступ", I.outdent)}${this.tool("Увеличить отступ", I.indent)}</div>
        </div>
        <span class="tallsep"></span>
        <div class="rows inner">
          <div class="row"><button class="text">${I.wrap}Перенос текста</button></div>
          <div class="row"><button class="text">${I.merge}Объединить и поместить в центре${arrow}</button></div>
        </div>`)}
      ${this.group("Число", html`<div class="rows">
        <div class="row">${this.combo("Числовой формат", "Общий", "c-num")}</div>
        <div class="row">${this.tool("Финансовый формат", I.money)}${this.drop("Валюты")}${this.tool("Процентный формат", "%")}${this.tool("Формат с разделителями", "000")}${sep}${this.tool("Увеличить разрядность", I.decInc)}${this.tool("Уменьшить разрядность", I.decDec)}</div>
      </div>`)}
      ${this.group("Стили", html`
        ${this.big(I.cond, "Условное", "форматирование", "w116")}${this.big(I.table, "Форматировать", "как таблицу", "w82")}
        <div class="gallery"><div class="chips">
          <button class="chip normal">Обычный</button><button class="chip neutral">Нейтральный</button><button class="chip bad">Плохой</button>
          <button class="chip good">Хороший</button><button class="chip entry">Ввод</button><button class="chip output">Вывод</button></div>
          <div class="updown"><button aria-label="Вверх">${icon(5, 3, svg`<path d="M0 3h5L2.500 0z" fill="#b9bec5"/>`)}</button><button aria-label="Вниз">${icon(5, 3, svg`<path d="M0 0h5L2.500 3z" fill="#444"/>`)}</button><button aria-label="Все стили">${icon(7, 7, svg`<path d="M0 .5h7" stroke="#444"/><path d="M0 3h7L3.500 7z" fill="#444"/>`)}</button></div>
        </div>`, false)}
      ${this.group("Ячейки", html`${this.big(I.insCells, "Вставить", "", "w60")}${this.big(I.delCells, "Удалить", "", "w42")}${this.big(I.fmtCells, "Формат", "", "w48")}`, false)}
      ${this.group("Редактирование", html`
        <div class="stack edit">${this.small("Автосумма", icon(16, 16, svg`<path d="M4 2.500h8v3M4 2.500L8.500 8 4 13.500h8v-3" fill="none" stroke="#111" stroke-width="1.800"/>`), true)}${this.small("Заполнить", I.fillDown, true)}${this.small("Очистить", I.eraser, true)}</div>
        ${this.big(I.sort, "Сортировка", "и фильтр", "w66")}${this.big(I.find, "Найти и", "выделить", "w66")}`, false)}
    </div>`;
  }

  private renderFoot() {
    const nav: [string, string][] = [["Первый лист", "M2 2v8M9 2L5 6l4 4z"], ["Предыдущий лист", "M8 2L4 6l4 4z"], ["Следующий лист", "M4 2l4 4-4 4z"], ["Последний лист", "M10 2v8M3 2l4 4-4 4z"]];
    return html`<div class="foot">
      <div class="nav">${nav.map(([l, d]) => html`<button aria-label=${l}>${icon(12, 12, svg`<path d=${d} fill="#4a5058" stroke="#4a5058" stroke-width=".8"/>`)}</button>`)}</div>
      <div class="sheets"><button class="cur"><span>Лист1</span></button><button><span>Лист2</span></button><button><span>Лист3</span></button><button class="new" aria-label="Вставить лист">${I.newSheet}</button></div>
      <div class="hbar"><span class="split"></span><button class="end" aria-label="Влево">${icon(6, 10, svg`<path d="M6 0v10L0 5z" fill="#4a5058"/>`)}</button>
        <div class="thumb">${icon(8, 8, svg`<path d="M.5 0v8M2.500 0v8M4.500 0v8M6.500 0v8" stroke="#8a9099"/>`)}</div>
        <button class="end" aria-label="Вправо">${icon(6, 10, svg`<path d="M0 0v10l6-5z" fill="#4a5058"/>`)}</button><span class="split"></span><span class="room"></span></div>
    </div>`;
  }

  private renderStatus() {
    const knob = (d: string) => icon(17, 17, svg`<circle cx="8.500" cy="8.500" r="7.500" fill="#f0f2f4" stroke="#6d737b"/><path d=${d} stroke="#44494f" stroke-width="2"/>`);
    return html`<footer class="status"><span>Готово</span><span class="vsep"></span>
      <div class="views">
        <button class="sel" aria-label="Обычный">${icon(13, 11, grid(0.5, 0.5, 12, 10, 3, 3, "#5d5a45", "#fff"))}</button>
        <button aria-label="Разметка страницы">${icon(14, 12, svg`<rect x=".5" y=".5" width="13" height="11" fill="#b2b6bb" stroke="#5f656d"/><rect x="3.500" y="1.500" width="7" height="9" fill="#fff" stroke="#5f656d"/><path d="M5 4.500h4M5 6.500h4M5 8.500h4" stroke="#5f656d"/>`)}</button>
        <button aria-label="Страничный режим">${icon(14, 12, svg`<rect x=".5" y=".5" width="13" height="11" fill="#b2b6bb" stroke="#5f656d"/><path d="M1.500 1v6.500h4V1M5.500 1v6.500h4V1" fill="#fff" stroke="#5f656d"/>`)}</button>
      </div>
      <div class="zoom"><button class="pct">100%</button><button aria-label="Уменьшить">${knob("M5 8.500h7")}</button><input type="range" min="0" max="100" value="50" aria-label="Масштаб" /><button aria-label="Увеличить">${knob("M5 8.500h7M8.500 5v7")}</button></div>
    </footer>`;
  }

  private renderTaskbar() {
    const apps: [string, unknown, string][] = [["Проводник", T.folder, "run"], ["Total Commander", T.floppy, "run"], ["Firefox", T.firefox, "run"], ["Excel", T.xl, "run front"], ["Outlook", T.outlook, ""], ["Word", T.word, ""], ["Яндекс", T.yandex, ""], ["Агент", T.agent, "run"], ["Skype", T.skype, "run"], ["Инструменты", T.toolbox, "run"]];
    return html`<div class="taskbar">
      <button class="start" aria-label="Пуск">${T.orb}</button>
      <div class="apps">${apps.map(([l, i, c]) => html`<button class="app ${c}" aria-label=${l}>${i}</button>`)}
        <svg class="streak" width="120" height="39" viewBox="0 0 120 39" aria-hidden="true"><defs><filter id="soft" x="-20%" width="140%"><feGaussianBlur stdDeviation="1.800"/></filter></defs><path d="M16-4Q60 18 88 44h16Q76 14 34-4z" fill="#9fd0fb" filter="url(#soft)"/></svg>
      </div>
      <div class="tray">
        <button class="lang">EN</button>
        <button aria-label="Скрытые значки">${icon(8, 5, svg`<path d="M0 5h8L4 0z" fill="#fff"/>`)}</button>
        <button aria-label="Агент">${icon(14, 16, svg`<path d="M4.500 1.500h5v5h-5zM2 10h4v4H2zM8 10h4v4H8z" fill="#0e6b1c" stroke="#4dea4d" stroke-width="1.500"/><path d="M7 7v3M4 8h6" stroke="#4dea4d" stroke-width="1.500"/>`)}</button>
        <button aria-label="Центр поддержки">${icon(16, 16, svg`<path d="M2 1v14" stroke="#fff" stroke-width="1.500"/><path d="M3 2q3-1 5 0t6 1v6q-3 0-5-1t-6 0z" fill="#fff"/><circle cx="11" cy="11" r="4.500" fill="#d92c23"/><path d="M9 9l4 4M13 9l-4 4" stroke="#fff" stroke-width="1.300"/>`)}</button>
        <button aria-label="Сеть">${icon(16, 16, svg`<rect x="4.500" y="3.500" width="10" height="8" fill="#24568f" stroke="#fff" stroke-width="1.300"/><path d="M7 14.500h7M10 12v2M2 1v5M0.500 1v3h4V1" fill="none" stroke="#fff" stroke-width="1.300"/>`)}</button>
        <button aria-label="Громкость">${icon(16, 16, svg`<path d="M1 5h3l4-4v13l-4-4H1z" fill="#fff"/><circle cx="11" cy="11" r="4" fill="#d92c23" stroke="#fff" stroke-width=".8"/><path d="M8.500 8.500l5 5" stroke="#fff" stroke-width="1.300"/>`)}</button>
        <div class="clock">10:38<br />26.12.2013</div>
      </div>
      <button class="desk" aria-label="Свернуть все окна"></button>
    </div>`;
  }

  render() {
    return html`${this.renderTitle()}${this.renderTabs()}${this.renderRibbon()}
      <div class="formula">
        <div class="name"><input aria-label="Имя ячейки" value="R14C13" /><button aria-label="Список имен">${icon(7, 4, svg`<path d="M0 0h7L3.500 4z" fill="#333"/>`)}</button></div>
        <div class="fx"><i></i><button aria-label="Вставить функцию">fx</button></div>
        <input class="value" aria-label="Строка формул" /><button class="expand" aria-label="Развернуть строку формул">${icon(8, 6, svg`<path d="M1 1l3 3 3-3" fill="none" stroke="#444" stroke-width="2"/>`)}</button>
      </div>
      <main class="sheet"><sheet-grid></sheet-grid>
        <div class="vbar"><span class="split"></span><button class="end" aria-label="Вверх">${icon(9, 5, svg`<path d="M0 5h9L4.500 0z" fill="#4a5058"/>`)}</button>
          <div class="thumb">${icon(8, 8, svg`<path d="M0 .5h8M0 2.500h8M0 4.500h8M0 6.500h8" stroke="#8a9099"/>`)}</div>
          <button class="end" aria-label="Вниз">${icon(9, 5, svg`<path d="M0 0h9L4.500 5z" fill="#4a5058"/>`)}</button></div>
      </main>
      ${this.renderFoot()}${this.renderStatus()}${this.renderTaskbar()}`;
  }
}
